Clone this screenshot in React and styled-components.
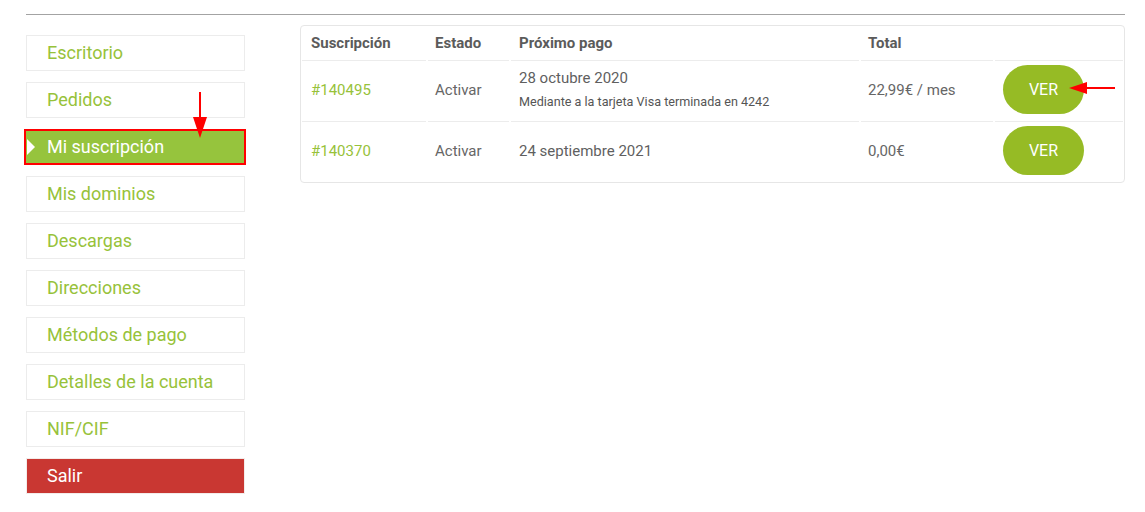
import styled, { createGlobalStyle } from 'styled-components';

const GlobalStyle = createGlobalStyle`
  body {
    margin: 0;
    background: #ffffff;
    font-family: Roboto, 'Liberation Sans', sans-serif;
  }
`;

const Page = styled.div`
  padding: 14px 20px 0 26px;
  width: 1099px;
`;

const TopRule = styled.div`
  height: 1px;
  background: #a3a3a3;
`;

const Main = styled.div`
  display: flex;
  align-items: flex-start;
  gap: 55px;
  margin-top: 10px;
`;

const Sidebar = styled.nav`
  display: flex;
  flex-direction: column;
  gap: 11px;
  width: 220px;
  margin-top: 10px;
`;

const NavItem = styled.div`
  position: relative;
  box-sizing: border-box;
  height: 36px;
  display: flex;
  align-items: center;
  padding-left: ${p => (p.active ? '21px' : '20px')};
  padding-bottom: 2px;
  font-size: 18px;
  color: ${p => (p.active || p.danger ? '#ffffff' : '#97c23a')};
  background: ${p => (p.active ? '#96c43d' : p.danger ? '#c93732' : '#ffffff')};
  border: ${p => (p.active ? '2px solid #ff0000' : p.danger ? '1px solid #f3ecea' : '1px solid #ececec')};
  margin: ${p => (p.active ? '0 -1px 0 -2px' : '0')};
`;

const Notch = styled.span`
  position: absolute;
  left: 1px;
  top: 8px;
  width: 0;
  height: 0;
  border-top: 8px solid transparent;
  border-bottom: 8px solid transparent;
  border-left: 8px solid #ffffff;
`;

const DownArrow = styled.svg`
  position: absolute;
  left: 166px;
  top: -39px;
  overflow: visible;
`;

const Table = styled.div`
  width: 825px;
  box-sizing: border-box;
  border: 1px solid #e6e6e6;
  border-radius: 4px;
  padding: 0 1px;
  display: grid;
  grid-template-columns: 124px 81px 348px 132px 128px;
  column-gap: 2px;
`;

const HeadCell = styled.div`
  box-sizing: border-box;
  height: 35px;
  display: flex;
  align-items: center;
  padding-left: ${p => p.pad || 9}px;
  font-size: 15px;
  font-weight: 700;
  color: #5b5b5b;
  border-bottom: 1px solid #ececec;
`;

const Cell = styled.div`
  position: relative;
  box-sizing: border-box;
  height: ${p => (p.last ? 60 : 61)}px;
  display: flex;
  flex-direction: column;
  justify-content: center;
  padding-left: ${p => p.pad || 9}px;
  padding-bottom: 3px;
  font-size: 15px;
  color: ${p => (p.link ? '#97c23a' : '#666666')};
  border-bottom: ${p => (p.last ? 'none' : '1px solid #ececec')};
`;

const DateLine = styled.div`
  color: #5f5f5f;
  margin-top: ${p => (p.withSub ? '-2px' : '0')};
`;

const SubLine = styled.div`
  font-size: 12.6px;
  color: #555555;
  margin-top: 7px;
`;

const ViewButton = styled.button`
  width: 81px;
  height: 49px;
  border: none;
  border-radius: 25px;
  background: #96bb25;
  color: #ffffff;
  font-family: Roboto, 'Liberation Sans', sans-serif;
  font-size: 16px;
  cursor: pointer;
`;

const LeftArrow = styled.svg`
  position: absolute;
  left: 74px;
  top: 21px;
  overflow: visible;
`;

const menu = [
  'Escritorio',
  'Pedidos',
  'Mi suscripción',
  'Mis dominios',
  'Descargas',
  'Direcciones',
  'Métodos de pago',
  'Detalles de la cuenta',
  'NIF/CIF',
  'Salir',
];

const rows = [
  { id: '#140495', state: 'Activar', date: '28 octubre 2020', sub: 'Mediante a la tarjeta Visa terminada en 4242', total: '22,99€ / mes', arrow: true },
  { id: '#140370', state: 'Activar', date: '24 septiembre 2021', total: '0,00€' },
];

export default function App() {
  return (
    <>
      <GlobalStyle />
      <Page>
        <TopRule />
        <Main>
          <Sidebar>
            {menu.map(label => {
              const active = label === 'Mi suscripción';
              return (
                <NavItem key={label} active={active} danger={label === 'Salir'}>
                  {active && <Notch />}
                  {active && (
                    <DownArrow width="16" height="48">
                      <line x1="8" y1="0" x2="8" y2="28" stroke="#ff0000" strokeWidth="2" />
                      <polygon points="1,25 15,25 8,46" fill="#ff0000" />
                    </DownArrow>
                  )}
                  {label}
                </NavItem>
              );
            })}
          </Sidebar>
          <Table>
            <HeadCell>Suscripción</HeadCell>
            <HeadCell pad={7}>Estado</HeadCell>
            <HeadCell pad={8}>Próximo pago</HeadCell>
            <HeadCell pad={7}>Total</HeadCell>
            <HeadCell />
            {rows.map((r, i) => {
              const last = i === rows.length - 1;
              return [
                <Cell key={r.id + 'a'} link last={last}>{r.id}</Cell>,
                <Cell key={r.id + 'b'} pad={7} last={last}>{r.state}</Cell>,
                <Cell key={r.id + 'c'} pad={8} last={last}>
                  <DateLine withSub={!!r.sub}>{r.date}</DateLine>
                  {r.sub && <SubLine>{r.sub}</SubLine>}
                </Cell>,
                <Cell key={r.id + 'd'} pad={7} last={last}>{r.total}</Cell>,
                <Cell key={r.id + 'e'} pad={8} last={last}>
                  <ViewButton>VER</ViewButton>
                  {r.arrow && (
                    <LeftArrow width="46" height="14">
                      <line x1="14" y1="6" x2="46" y2="6" stroke="#ff0000" strokeWidth="2" />
                      <polygon points="0,6 18,0 18,12" fill="#ff0000" />
                    </LeftArrow>
                  )}
                </Cell>,
              ];
            })}
          </Table>
        </Main>
      </Page>
    </>
  );
}
